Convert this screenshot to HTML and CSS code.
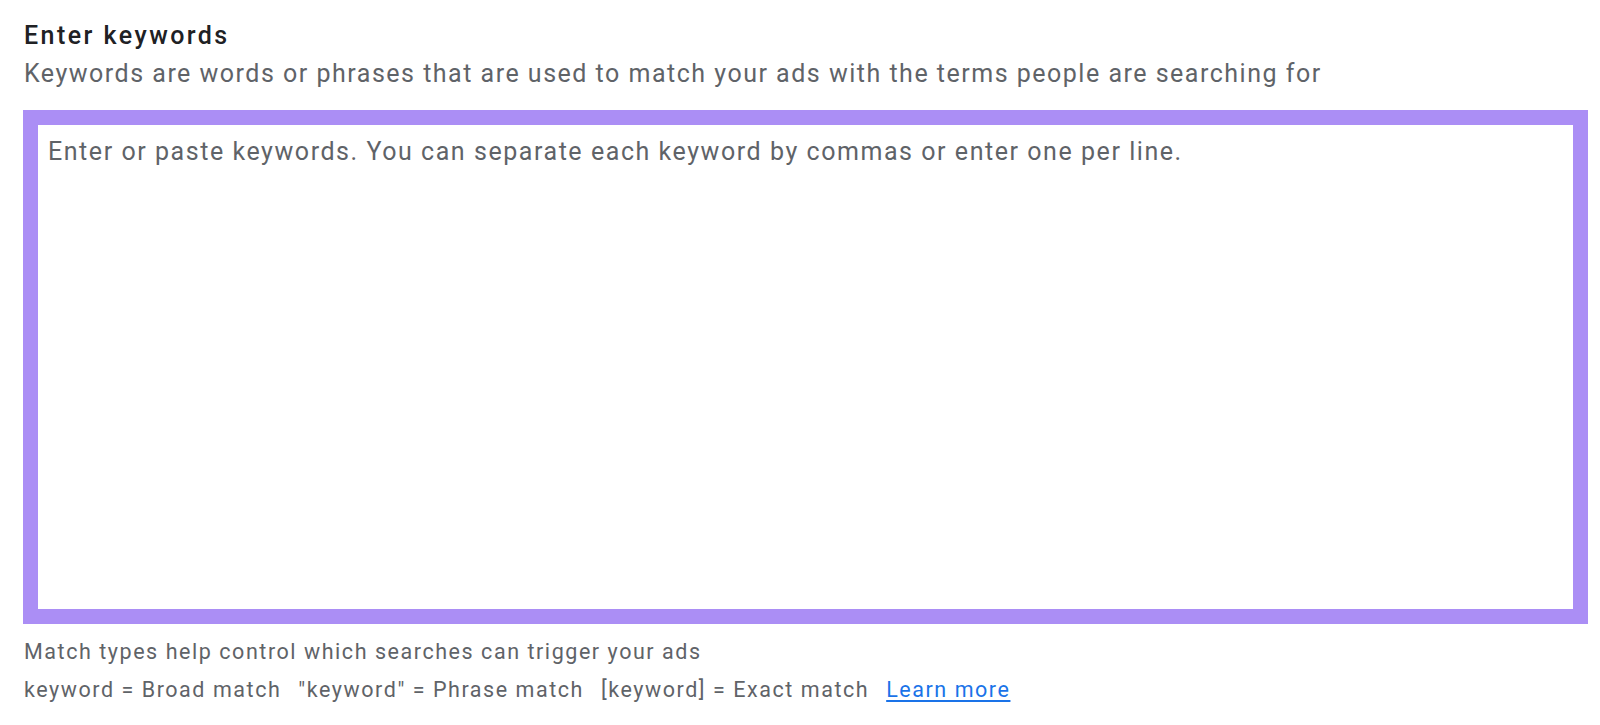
FILE: index.html
```html
<!DOCTYPE html>
<html lang="en">
<head>
<meta charset="utf-8">
<link rel="stylesheet" href="styles.css">
</head>
<body>
<main class="page">
  <h1 class="title">Enter keywords</h1>
  <p class="subtitle">Keywords are words or phrases that are used to match your ads with the terms people are searching for</p>
  <div class="field">
    <div class="input">Enter or paste keywords. You can separate each keyword by commas or enter one per line.</div>
  </div>
  <p class="hint first">Match types help control which searches can trigger your ads</p>
  <p class="hint types"><span>keyword = Broad match</span><span>"keyword" = Phrase match</span><span>[keyword] = Exact match</span><a class="link" href="#">Learn more</a></p>
</main>
</body>
</html>
```
FILE: styles.css
```css
html, body { margin: 0; padding: 0; background: #fff; }
body { font-family: Roboto, "Liberation Sans", sans-serif; }
.page { padding: 20px 12px 0 23px; }
.title { margin: 0 0 0 1px; font-size: 25px; font-weight: 500; color: #202124; line-height: 32px; letter-spacing: 2.45px; }
.subtitle { margin: 5px 0 0 1px; font-size: 25px; color: #5f6368; line-height: 34px; letter-spacing: 1.5px; }
.field { margin-top: 19px; width: 1565px; height: 514px; box-sizing: border-box; border: 15px solid #ab8ef5; }
.input { padding: 12px 10px; font-size: 25px; color: #5f6368; line-height: 30px; letter-spacing: 1.55px; }
.hint { margin: 0 0 0 1px; font-size: 21.5px; color: #5f6368; line-height: 38px; letter-spacing: 1.55px; }
.hint.first { margin-top: 9px; }
.types span { margin-right: 17px; }
.link { color: #1a73e8; text-decoration: underline; text-underline-offset: 3px; }
```
